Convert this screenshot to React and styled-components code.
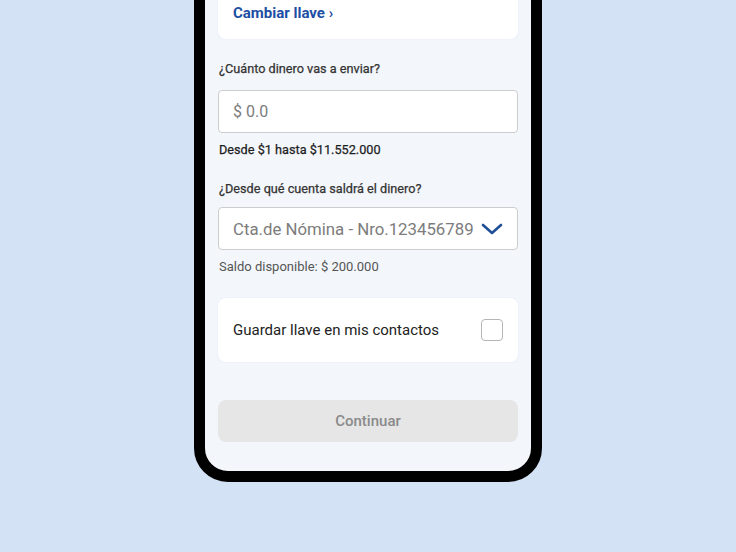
import React from "react";
import styled, { createGlobalStyle } from "styled-components";

const Global = createGlobalStyle`
  html, body { margin: 0; padding: 0; }
  body { font-family: Roboto, "Noto Sans", Arial, sans-serif; background: #d3e3f5; overflow: hidden; }
  * { box-sizing: border-box; }
`;

const Stage = styled.div`
  width: 736px;
  height: 552px;
  background: #d3e3f5;
  display: flex;
  justify-content: center;
  align-items: flex-start;
  overflow: hidden;
`;

const Phone = styled.div`
  margin-top: -66px;
  width: 348px;
  border: 11px solid #000;
  border-radius: 34px;
  background: #f3f7fc;
  overflow: hidden;
`;

const Screen = styled.div`
  display: flex;
  flex-direction: column;
  padding: 12px 13px 29px 13px;
`;

const Card = styled.div`
  background: #fff;
  border-radius: 8px;
  padding: ${(p) => p.$pad || "16px 15px"};
  display: flex;
  flex-direction: ${(p) => (p.$row ? "row" : "column")};
  align-items: ${(p) => (p.$row ? "center" : "stretch")};
  justify-content: space-between;
  height: ${(p) => p.$h || "auto"};
  margin-top: ${(p) => p.$mt || "0"};
  box-shadow: 0 0 2px rgba(200, 210, 225, 0.35);
`;

const LinkText = styled.a`
  font-size: 15px;
  line-height: 20px;
  font-weight: 700;
  color: #1c4fa3;
  text-decoration: none;
`;

const Label = styled.div`
  margin-top: ${(p) => p.$mt};
  font-size: ${(p) => (p.$medium ? "12.7px" : "13px")};
  line-height: 16px;
  color: ${(p) => p.$color || "#333"};
  font-weight: 400;
  padding-left: 1px;
  -webkit-text-stroke: ${(p) => (p.$medium ? "0.25px" : "0")};
`;

const Field = styled.div`
  margin-top: ${(p) => p.$mt};
  height: 43px;
  background: #fff;
  border: 1px solid #cdcdcd;
  border-radius: 4px;
  display: flex;
  align-items: center;
  justify-content: space-between;
  padding: 0 14px;
  font-size: ${(p) => p.$fs || "16px"};
  color: #7c7c7c;
`;

const CheckLabel = styled.span`
  font-size: 15px;
  color: #222;
`;

const Box = styled.span`
  width: 22px;
  height: 22px;
  border: 1px solid #b5b5b5;
  border-radius: 4px;
  background: #fff;
`;

const Button = styled.button`
  margin-top: 38px;
  height: 42px;
  border: none;
  border-radius: 8px;
  background: #e6e6e6;
  color: #8a8a8a;
  font-family: inherit;
  font-size: 15px;
  font-weight: 500;
`;

export default function App() {
  return (
    <>
      <Global />
      <Stage>
        <Phone>
          <Screen>
            <Card $pad="46px 15px 16px 15px">
              <LinkText>Cambiar llave ›</LinkText>
            </Card>
            <Label $mt="22px" $medium>¿Cuánto dinero vas a enviar?</Label>
            <Field $mt="13px">$ 0.0</Field>
            <Label $mt="9px" $color="#1e1e1e" $medium>Desde $1 hasta $11.552.000</Label>
            <Label $mt="23px" $medium>¿Desde qué cuenta saldrá el dinero?</Label>
            <Field $mt="10px" $fs="16.8px">
              <span>Cta.de Nómina - Nro.123456789</span>
              <svg width="22" height="14" viewBox="0 0 22 14">
                <path d="M2 3 L11 11 L20 3" fill="none" stroke="#1f4f96" strokeWidth="2.6" strokeLinecap="round" strokeLinejoin="round" />
              </svg>
            </Field>
            <Label $mt="9px" $color="#555">Saldo disponible: $ 200.000</Label>
            <Card $row $pad="0 15px" $h="64px" $mt="23px">
              <CheckLabel>Guardar llave en mis contactos</CheckLabel>
              <Box />
            </Card>
            <Button>Continuar</Button>
          </Screen>
        </Phone>
      </Stage>
    </>
  );
}
